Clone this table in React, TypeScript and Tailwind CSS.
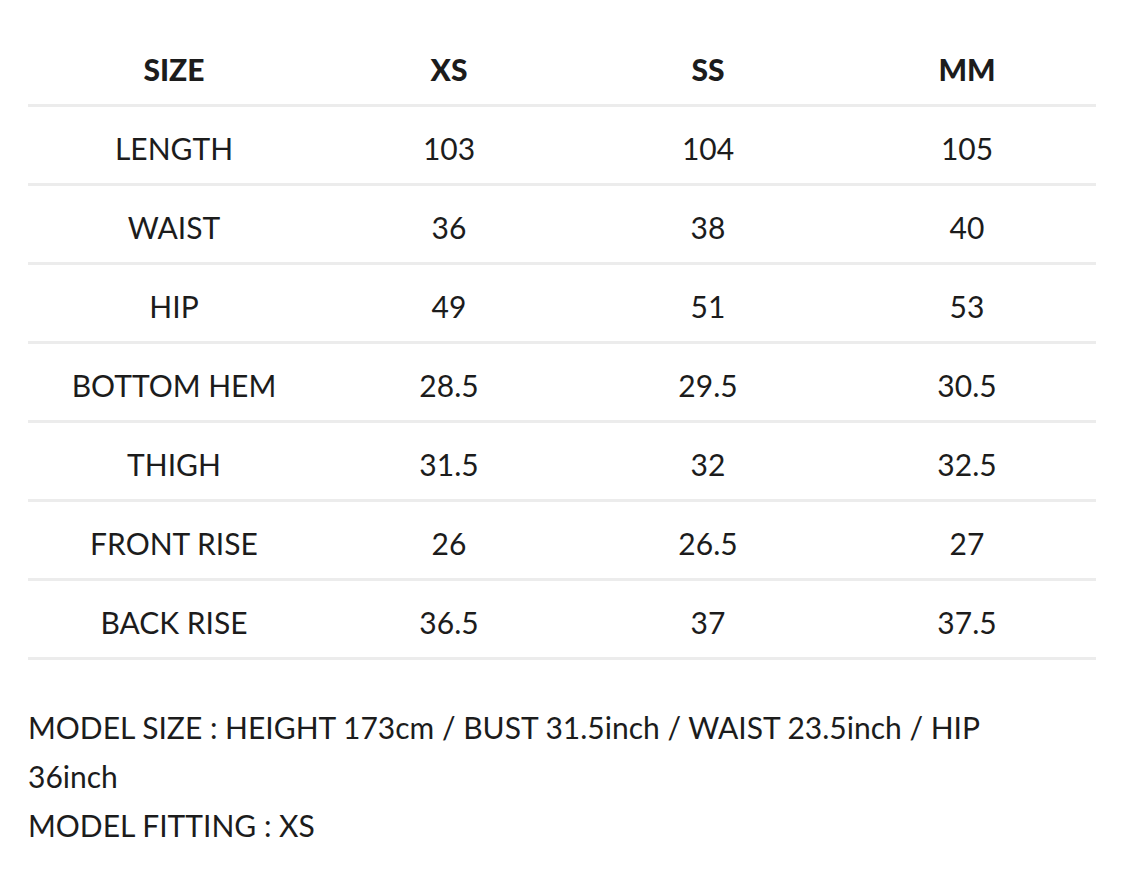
import React from "react";

const cols = ["SIZE", "XS", "SS", "MM"];
const rows: string[][] = [
  ["LENGTH", "103", "104", "105"],
  ["WAIST", "36", "38", "40"],
  ["HIP", "49", "51", "53"],
  ["BOTTOM HEM", "28.5", "29.5", "30.5"],
  ["THIGH", "31.5", "32", "32.5"],
  ["FRONT RISE", "26", "26.5", "27"],
  ["BACK RISE", "36.5", "37", "37.5"],
];

export default function App() {
  return (
    <div
      className="w-[1125px] h-[885px] bg-white text-[#1c1c1c] overflow-hidden"
      style={{ fontFamily: "Lato, 'Noto Sans', sans-serif" }}
    >
      <div className="ml-[28px] w-[1068px] pt-[36px]">
        <div className="grid grid-cols-[292px_258px_260px_258px] h-[71px] items-center border-b-[3px] border-[#ececec]">
          {cols.map((c) => (
            <div key={c} className="text-center text-[30px] font-black leading-none -mt-[2px]">
              {c}
            </div>
          ))}
        </div>
        {rows.map((r) => (
          <div
            key={r[0]}
            className="grid grid-cols-[292px_258px_260px_258px] h-[79px] pt-[6px] items-center border-b-[3px] border-[#ececec]"
          >
            {r.map((v, i) => (
              <div key={i} className="text-center text-[30px] leading-none">
                {v}
              </div>
            ))}
          </div>
        ))}
        <div className="mt-[43px] text-[30px] leading-[49px] w-[1000px]">
          <p>MODEL SIZE : HEIGHT 173cm / BUST 31.5inch / WAIST 23.5inch / HIP 36inch</p>
          <p>MODEL FITTING : XS</p>
        </div>
      </div>
    </div>
  );
}
